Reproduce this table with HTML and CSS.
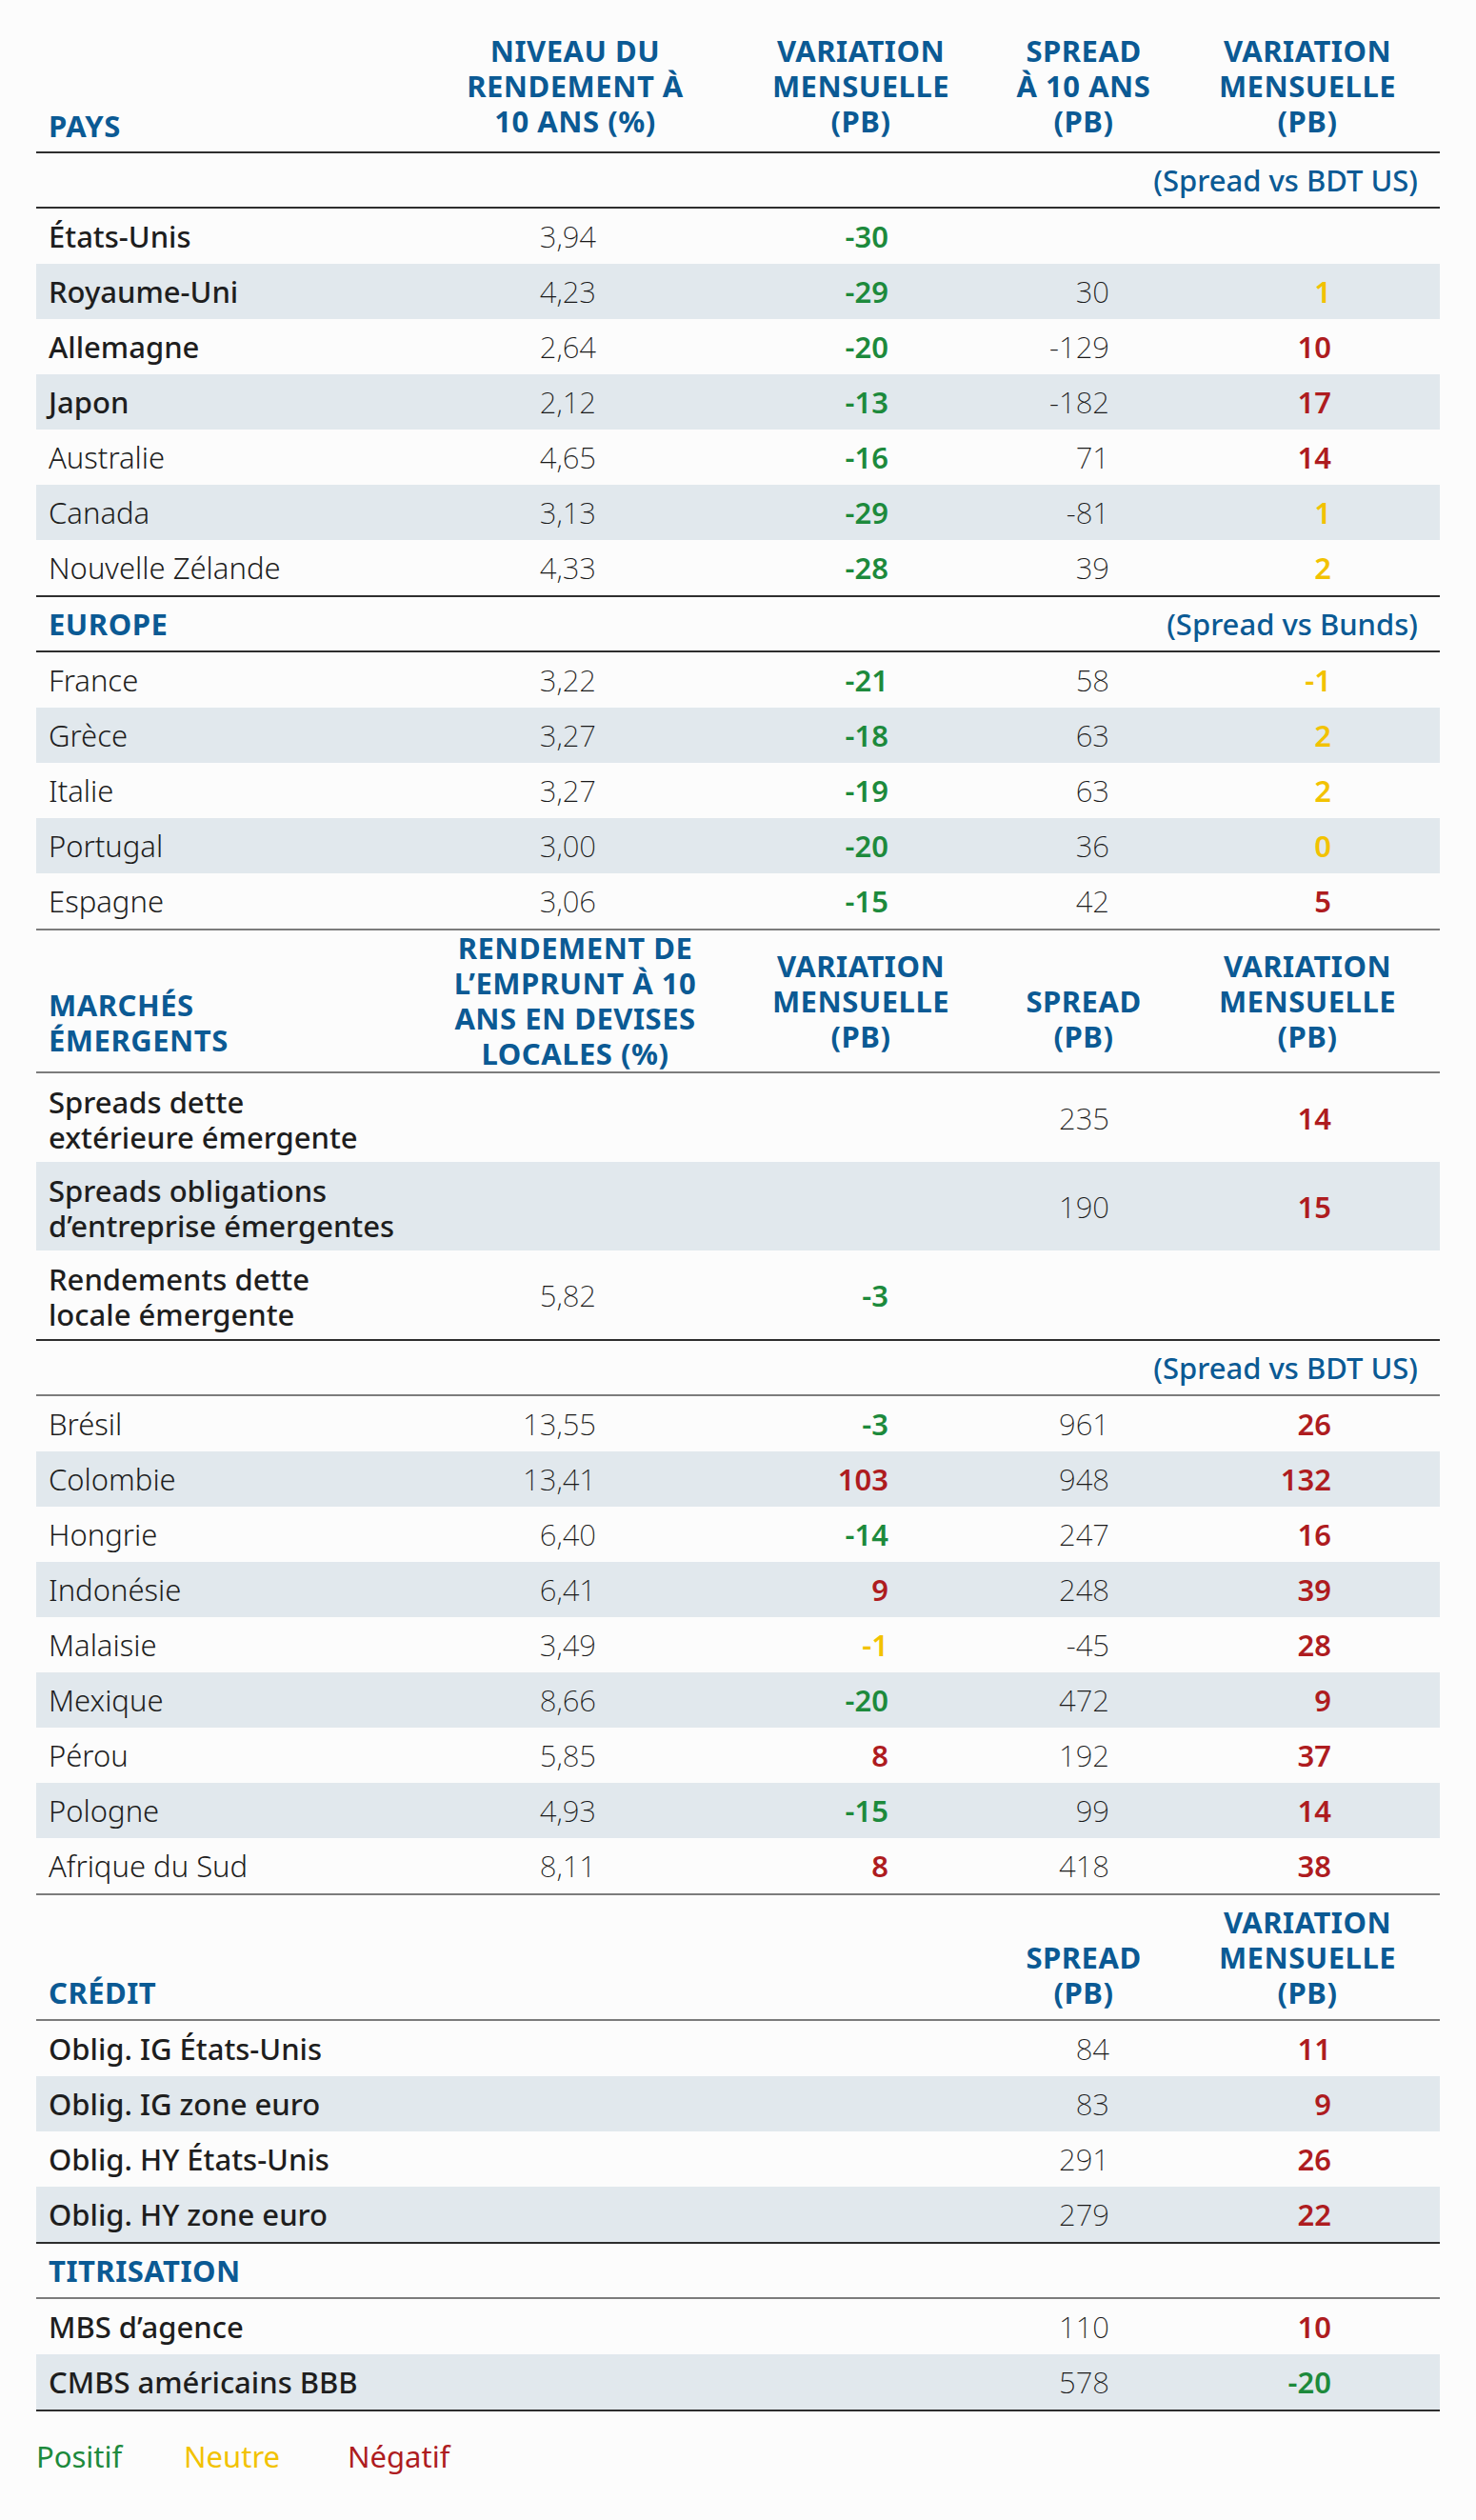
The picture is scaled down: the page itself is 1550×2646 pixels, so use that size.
FILE: index.html
```html
<!DOCTYPE html>
<html lang="fr">
<head>
<meta charset="utf-8">
<title>Marchés obligataires</title>
<link rel="stylesheet" href="styles.css">
</head>
<body>
<div class="page">
  <div class="tbl">
    <div class="hdr hdr-main bd">
      <div class="hc hc1 pays">PAYS</div>
      <div class="hc">NIVEAU DU<br>RENDEMENT À<br>10 ANS (%)</div>
      <div class="hc">VARIATION<br>MENSUELLE<br>(PB)</div>
      <div class="hc">SPREAD<br>À 10 ANS<br>(PB)</div>
      <div class="hc hc5">VARIATION<br>MENSUELLE<br>(PB)</div>
    </div>
    <div class="sub bd"><span class="sec"></span><span class="note">(Spread vs BDT US)</span></div>
    <div class="grp bd">
      <div class="row"><div class="nm md">États-Unis</div><div class="v">3,94</div><div class="v c3 pos">-30</div><div class="v c4"></div><div class="v c5"></div></div>
      <div class="row"><div class="nm md">Royaume-Uni</div><div class="v">4,23</div><div class="v c3 pos">-29</div><div class="v c4">30</div><div class="v c5 neu">1</div></div>
      <div class="row"><div class="nm md">Allemagne</div><div class="v">2,64</div><div class="v c3 pos">-20</div><div class="v c4">-129</div><div class="v c5 neg">10</div></div>
      <div class="row"><div class="nm md">Japon</div><div class="v">2,12</div><div class="v c3 pos">-13</div><div class="v c4">-182</div><div class="v c5 neg">17</div></div>
      <div class="row"><div class="nm">Australie</div><div class="v">4,65</div><div class="v c3 pos">-16</div><div class="v c4">71</div><div class="v c5 neg">14</div></div>
      <div class="row"><div class="nm">Canada</div><div class="v">3,13</div><div class="v c3 pos">-29</div><div class="v c4">-81</div><div class="v c5 neu">1</div></div>
      <div class="row"><div class="nm">Nouvelle Zélande</div><div class="v">4,33</div><div class="v c3 pos">-28</div><div class="v c4">39</div><div class="v c5 neu">2</div></div>
    </div>
    <div class="sub bd"><span class="sec">EUROPE</span><span class="note">(Spread vs Bunds)</span></div>
    <div class="grp bg">
      <div class="row"><div class="nm">France</div><div class="v">3,22</div><div class="v c3 pos">-21</div><div class="v c4">58</div><div class="v c5 neu">-1</div></div>
      <div class="row"><div class="nm">Grèce</div><div class="v">3,27</div><div class="v c3 pos">-18</div><div class="v c4">63</div><div class="v c5 neu">2</div></div>
      <div class="row"><div class="nm">Italie</div><div class="v">3,27</div><div class="v c3 pos">-19</div><div class="v c4">63</div><div class="v c5 neu">2</div></div>
      <div class="row"><div class="nm">Portugal</div><div class="v">3,00</div><div class="v c3 pos">-20</div><div class="v c4">36</div><div class="v c5 neu">0</div></div>
      <div class="row"><div class="nm">Espagne</div><div class="v">3,06</div><div class="v c3 pos">-15</div><div class="v c4">42</div><div class="v c5 neg">5</div></div>
    </div>
    <div class="hdr hdr-em bg">
      <div class="hc hc1 em1">MARCHÉS<br>ÉMERGENTS</div>
      <div class="hc em2">RENDEMENT DE<br>L’EMPRUNT À 10<br>ANS EN DEVISES<br>LOCALES (%)</div>
      <div class="hc em3">VARIATION<br>MENSUELLE<br>(PB)</div>
      <div class="hc em3">SPREAD<br>(PB)</div>
      <div class="hc hc5 em3">VARIATION<br>MENSUELLE<br>(PB)</div>
    </div>
    <div class="grp bd">
      <div class="row tall"><div class="nm md two">Spreads dette<br>extérieure émergente</div><div class="v"></div><div class="v c3"></div><div class="v c4">235</div><div class="v c5 neg">14</div></div>
      <div class="row tall"><div class="nm md two">Spreads obligations<br>d’entreprise émergentes</div><div class="v"></div><div class="v c3"></div><div class="v c4">190</div><div class="v c5 neg">15</div></div>
      <div class="row tall"><div class="nm md two">Rendements dette<br>locale émergente</div><div class="v">5,82</div><div class="v c3 pos">-3</div><div class="v c4"></div><div class="v c5"></div></div>
    </div>
    <div class="sub bg"><span class="sec"></span><span class="note">(Spread vs BDT US)</span></div>
    <div class="grp bg">
      <div class="row"><div class="nm">Brésil</div><div class="v">13,55</div><div class="v c3 pos">-3</div><div class="v c4">961</div><div class="v c5 neg">26</div></div>
      <div class="row"><div class="nm">Colombie</div><div class="v">13,41</div><div class="v c3 neg">103</div><div class="v c4">948</div><div class="v c5 neg">132</div></div>
      <div class="row"><div class="nm">Hongrie</div><div class="v">6,40</div><div class="v c3 pos">-14</div><div class="v c4">247</div><div class="v c5 neg">16</div></div>
      <div class="row"><div class="nm">Indonésie</div><div class="v">6,41</div><div class="v c3 neg">9</div><div class="v c4">248</div><div class="v c5 neg">39</div></div>
      <div class="row"><div class="nm">Malaisie</div><div class="v">3,49</div><div class="v c3 neu">-1</div><div class="v c4">-45</div><div class="v c5 neg">28</div></div>
      <div class="row"><div class="nm">Mexique</div><div class="v">8,66</div><div class="v c3 pos">-20</div><div class="v c4">472</div><div class="v c5 neg">9</div></div>
      <div class="row"><div class="nm">Pérou</div><div class="v">5,85</div><div class="v c3 neg">8</div><div class="v c4">192</div><div class="v c5 neg">37</div></div>
      <div class="row"><div class="nm">Pologne</div><div class="v">4,93</div><div class="v c3 pos">-15</div><div class="v c4">99</div><div class="v c5 neg">14</div></div>
      <div class="row"><div class="nm">Afrique du Sud</div><div class="v">8,11</div><div class="v c3 neg">8</div><div class="v c4">418</div><div class="v c5 neg">38</div></div>
    </div>
    <div class="hdr hdr-cr bg">
      <div class="hc hc1 cr1">CRÉDIT</div>
      <div class="hc"></div>
      <div class="hc"></div>
      <div class="hc">SPREAD<br>(PB)</div>
      <div class="hc hc5">VARIATION<br>MENSUELLE<br>(PB)</div>
    </div>
    <div class="grp bd">
      <div class="row"><div class="nm md">Oblig. IG États-Unis</div><div class="v"></div><div class="v c3"></div><div class="v c4">84</div><div class="v c5 neg">11</div></div>
      <div class="row"><div class="nm md">Oblig. IG zone euro</div><div class="v"></div><div class="v c3"></div><div class="v c4">83</div><div class="v c5 neg">9</div></div>
      <div class="row"><div class="nm md">Oblig. HY États-Unis</div><div class="v"></div><div class="v c3"></div><div class="v c4">291</div><div class="v c5 neg">26</div></div>
      <div class="row"><div class="nm md">Oblig. HY zone euro</div><div class="v"></div><div class="v c3"></div><div class="v c4">279</div><div class="v c5 neg">22</div></div>
    </div>
    <div class="sub bg"><span class="sec">TITRISATION</span><span class="note"></span></div>
    <div class="grp bd">
      <div class="row"><div class="nm md">MBS d’agence</div><div class="v"></div><div class="v c3"></div><div class="v c4">110</div><div class="v c5 neg">10</div></div>
      <div class="row"><div class="nm md">CMBS américains BBB</div><div class="v"></div><div class="v c3"></div><div class="v c4">578</div><div class="v c5 pos">-20</div></div>
    </div>
  </div>
  <div class="legend">
    <span class="lg pos-l">Positif</span>
    <span class="lg neu-l">Neutre</span>
    <span class="lg neg-l">Négatif</span>
  </div>
</div>
</body>
</html>
```
FILE: styles.css
```css
html, body {
  margin: 0;
  padding: 0;
  background: #fcfcfc;
}
body {
  font-family: "Noto Sans", "Open Sans", "DejaVu Sans", sans-serif;
  color: #1e1e1e;
  font-size: 31px;
}
.page {
  padding: 35px 38px 0 38px;
  width: 1474px;
}
.tbl {
  width: 1474px;
}
.bd { border-bottom: 2px solid #2e2e2e; }
.bg { border-bottom: 2px solid #7c7c7c; }

/* header rows */
.hdr {
  display: grid;
  grid-template-columns: 416px 300px 300px 168px 290px;
  align-items: end;
  color: #0b5a94;
  font-weight: 750;
  font-size: 31px;
  letter-spacing: 0.5px;
}
.hc {
  text-align: center;
  line-height: 37px;
  white-space: nowrap;
}
.hc1 {
  text-align: left;
  padding-left: 13px;
}
.hc5 { padding-left: 12px; }
.hdr-main { padding-bottom: 13px; }
.hdr-main .pays { position: relative; top: 5px; }

.hdr-em { height: 148px; }
.hdr-em .em1 { padding-bottom: 14px; }
.hdr-em .em2 { padding-bottom: 0; }
.hdr-em .em3 { padding-bottom: 18px; }

.hdr-cr { height: 130px; }
.hdr-cr .hc { padding-bottom: 9px; }

/* sub rows */
.sub {
  height: 56px;
  display: flex;
  align-items: center;
  justify-content: space-between;
  padding: 0 23px 0 13px;
}
.sec {
  color: #0b5a94;
  font-weight: 750;
  letter-spacing: 0.5px;
}
.note {
  color: #0b5a94;
  font-weight: 500;
}

/* data rows */
.row {
  display: grid;
  grid-template-columns: 416px 300px 300px 168px 290px;
  height: 58px;
  align-items: center;
}
.row:nth-child(even) {
  background: #e1e8ed;
}
.row.tall {
  height: 93px;
}
.nm {
  padding-left: 13px;
  font-weight: 300;
  white-space: nowrap;
}
.nm.md { font-weight: 500; }
.nm.two {
  line-height: 37px;
  padding-top: 5px;
}
.v {
  text-align: right;
  padding-right: 128px;
  font-weight: 250;
  color: #1a1a1a;
}
.v.c3 { padding-right: 121px; }
.v.c4 { padding-right: 57px; }
.v.c5 { padding-right: 114px; }

.pos { color: #1d8a3c; font-weight: 600; }
.neu { color: #f2c200; font-weight: 600; }
.neg { color: #ae1c1f; font-weight: 600; }

/* legend */
.legend {
  display: flex;
  margin-top: 29px;
  line-height: 37px;
  font-weight: 400;
}
.lg { display: inline-block; }
.pos-l { color: #1d8a3c; width: 155px; }
.neu-l { color: #f2c200; width: 172px; }
.neg-l { color: #ae1c1f; }
```
